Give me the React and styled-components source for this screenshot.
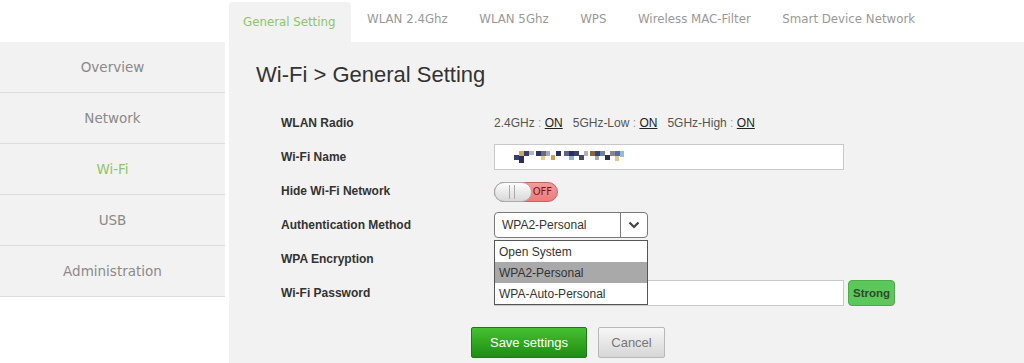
import React from 'react'
import styled, { createGlobalStyle } from 'styled-components'

const GlobalStyle = createGlobalStyle`
  html, body { margin: 0; padding: 0; background: #fff; }
  body { font-family: "Liberation Sans", Arial, sans-serif; }
`

const menu = ['Overview', 'Network', 'Wi-Fi', 'USB', 'Administration']
const tabs = ['General Setting', 'WLAN 2.4Ghz', 'WLAN 5Ghz', 'WPS', 'Wireless MAC-Filter', 'Smart Device Network']
const authOptions = ['Open System', 'WPA2-Personal', 'WPA-Auto-Personal']

// redacted ssid mosaic, [x, y, w, h, colour]
const mosaic = [
  [2, 5, 5, 5, '#3a3f6a'], [7, 1, 5, 5, '#c8a860'], [7, 6, 5, 7, '#2a2f5a'], [12, 1, 5, 5, '#3a3f6a'],
  [17, 1, 5, 4, '#b0b4c4'],
  [24, 1, 5, 5, '#2f3560'], [29, 1, 5, 5, '#6a6a7a'], [29, 6, 4, 4, '#e8d080'], [34, 1, 4, 5, '#a8a8b0'],
  [39, 5, 4, 5, '#c9a050'], [44, 1, 5, 5, '#2a3058'],
  [52, 1, 5, 5, '#5a6488'], [57, 1, 5, 5, '#2a2f5a'], [57, 6, 5, 4, '#8ab0d8'], [62, 1, 5, 5, '#3a4070'],
  [67, 5, 5, 5, '#444a60'], [72, 1, 4, 5, '#b0b0b8'],
  [78, 1, 5, 5, '#8a6a3a'], [83, 1, 5, 5, '#3a4070'], [83, 6, 4, 4, '#aaa'], [88, 1, 5, 5, '#6a80b0'],
  [93, 5, 5, 5, '#2a2f5a'], [98, 1, 5, 5, '#888'], [103, 1, 5, 5, '#5070a0'], [103, 6, 4, 5, '#e0c880'],
  [108, 1, 4, 6, '#9ab8d8'],
]

function App() {
  return (
    <>
      <GlobalStyle />
      <Page>
        <Sidebar>
          {menu.map(item => (
            <MenuItem key={item} $active={item === 'Wi-Fi'}>{item}</MenuItem>
          ))}
        </Sidebar>
        <Main>
          <TabBar>
            {tabs.map((tab, i) => (
              <Tab key={tab} $active={i === 0}>{tab}</Tab>
            ))}
          </TabBar>
          <Panel>
            <Title>Wi-Fi &gt; General Setting</Title>
            <Form>
              <Row>
                <Label>WLAN Radio</Label>
                <Radio>
                  <span>2.4GHz <Colon>:</Colon> <On>ON</On></span>
                  <span>5GHz-Low <Colon>:</Colon> <On>ON</On></span>
                  <span>5GHz-High <Colon>:</Colon> <On>ON</On></span>
                </Radio>
              </Row>
              <Row>
                <Label>Wi-Fi Name</Label>
                <TextBox>
                  <svg width="112" height="14" viewBox="0 0 112 14">
                    {mosaic.map(([x, y, w, h, c], i) => (
                      <rect key={i} x={x} y={y} width={w} height={h} fill={c} />
                    ))}
                  </svg>
                </TextBox>
              </Row>
              <Row>
                <Label>Hide Wi-Fi Network</Label>
                <Toggle>
                  <Knob />
                  <ToggleText>OFF</ToggleText>
                </Toggle>
              </Row>
              <Row>
                <Label>Authentication Method</Label>
                <SelectWrap>
                  <Select>
                    <SelectValue>WPA2-Personal</SelectValue>
                    <SelectArrow>
                      <svg width="12" height="8" viewBox="0 0 12 8">
                        <polyline points="1.5,1.5 6,6 10.5,1.5" fill="none" stroke="#444" strokeWidth="2.2" />
                      </svg>
                    </SelectArrow>
                  </Select>
                  <Dropdown>
                    {authOptions.map(opt => (
                      <Option key={opt} $selected={opt === 'WPA2-Personal'}>{opt}</Option>
                    ))}
                  </Dropdown>
                </SelectWrap>
              </Row>
              <Row>
                <Label>WPA Encryption</Label>
              </Row>
              <Row>
                <Label>Wi-Fi Password</Label>
                <TextBox />
                <Strength>Strong</Strength>
              </Row>
            </Form>
            <Buttons>
              <SaveButton>Save settings</SaveButton>
              <CancelButton>Cancel</CancelButton>
            </Buttons>
          </Panel>
        </Main>
      </Page>
    </>
  )
}

export default App

const Page = styled.div`
display: flex;
min-height: 363px;
`

const Sidebar = styled.div`
width: 225px;
margin-top: 42px;
align-self: flex-start;
`

const MenuItem = styled.div`
height: 50px;
display: flex;
align-items: center;
justify-content: center;
background: #f2f2f2;
border-bottom: 1px solid #dcdcdc;
font-family: "DejaVu Sans", Verdana, sans-serif;
font-size: 13.5px;
color: ${p => p.$active ? '#8dc46b' : '#8a8a8a'};
`

const Main = styled.div`
flex: 1;
margin-left: 4px;
display: flex;
flex-direction: column;
`

const TabBar = styled.div`
height: 42px;
display: flex;
align-items: flex-end;
`

const Tab = styled.div`
height: 40px;
padding: 0 16px 0 ${p => p.$active ? '14px' : '15.5px'};
display: flex;
align-items: center;
border-radius: 4px 4px 0 0;
background: ${p => p.$active ? '#f2f2f2' : 'transparent'};
font-family: "DejaVu Sans", Verdana, sans-serif;
font-size: 11.8px;
color: ${p => p.$active ? '#8dc46b' : '#999'};
margin-bottom: ${p => p.$active ? '0' : '3px'};
`

const Panel = styled.div`
flex: 1;
background: #f2f2f2;
padding: 20px 0 0 27px;
`

const Title = styled.h1`
margin: 0 0 18px;
font-size: 22px;
line-height: 26px;
font-weight: normal;
color: #333;
`

const Form = styled.div`
display: flex;
flex-direction: column;
padding-left: 25px;
`

const Row = styled.div`
height: 34px;
display: flex;
align-items: center;
`

const Label = styled.div`
width: 213px;
font-size: 12px;
font-weight: bold;
color: #333;
`

const Radio = styled.div`
display: flex;
gap: 10px;
font-size: 12px;
color: #555;
`

const Colon = styled.span`
color: #999;
`

const On = styled.span`
color: #222;
text-decoration: underline;
`

const TextBox = styled.div`
box-sizing: border-box;
width: 350px;
height: 26px;
background: #fff;
border: 1px solid #c8c8c8;
display: flex;
align-items: center;
padding-left: 17px;
`

const Toggle = styled.div`
position: relative;
box-sizing: border-box;
width: 64px;
height: 20px;
margin-top: 1px;
border-radius: 10px;
background: linear-gradient(#f59a9a, #ee7b7b);
border: 1px solid #c46262;
display: flex;
align-items: center;
justify-content: flex-end;
padding-right: 5px;
`

const Knob = styled.div`
position: absolute;
left: -1px;
top: -1px;
width: 38px;
height: 20px;
box-sizing: border-box;
border-radius: 10px;
border: 1px solid #aaa;
background: linear-gradient(#fdfdfd, #d8d8d8);
&::before, &::after {
  content: '';
  position: absolute;
  top: 2px;
  bottom: 2px;
  width: 1px;
  background: #aaa;
}
&::before { left: 14px; }
&::after { left: 19px; }
`

const ToggleText = styled.span`
font-family: "DejaVu Sans", Verdana, sans-serif;
font-size: 10px;
color: #7a1414;
`

const SelectWrap = styled.div`
position: relative;
`

const Select = styled.div`
box-sizing: border-box;
width: 154px;
height: 26px;
background: #fff;
border: 1px solid #7a7a7a;
border-radius: 4px;
display: flex;
`

const SelectValue = styled.div`
flex: 1;
display: flex;
align-items: center;
padding-left: 7px;
font-size: 12px;
color: #333;
`

const SelectArrow = styled.div`
width: 26px;
border-left: 1px solid #7a7a7a;
display: flex;
align-items: center;
justify-content: center;
`

const Dropdown = styled.div`
position: absolute;
z-index: 2;
left: 0;
top: 28px;
box-sizing: border-box;
width: 154px;
background: #fff;
border: 1px solid #555;
`

const Option = styled.div`
height: 21px;
display: flex;
align-items: center;
padding-left: 4px;
font-size: 12px;
color: #333;
background: ${p => p.$selected ? '#a9a9a9' : '#fff'};
`

const Strength = styled.div`
box-sizing: border-box;
margin-left: 4px;
width: 47px;
height: 26px;
border-radius: 4px;
background: #5cc85c;
border: 1px solid #4aab4a;
display: flex;
align-items: center;
justify-content: center;
font-size: 11.5px;
font-weight: bold;
color: #2e4a2e;
`

const Buttons = styled.div`
display: flex;
gap: 11px;
padding-left: 215px;
margin-top: 17px;
`

const SaveButton = styled.button`
width: 116px;
height: 31px;
border: 1px solid #1b7a12;
border-radius: 2px;
background: linear-gradient(#45c033, #1e8e12);
color: #fff;
font-family: "Liberation Sans", Arial, sans-serif;
font-size: 13px;
padding: 0;
`

const CancelButton = styled.button`
width: 67px;
height: 31px;
border: 1px solid #b8b8b8;
border-radius: 2px;
background: linear-gradient(#f7f7f7, #d6d6d6);
color: #777;
font-family: "Liberation Sans", Arial, sans-serif;
font-size: 13px;
padding: 0;
`
